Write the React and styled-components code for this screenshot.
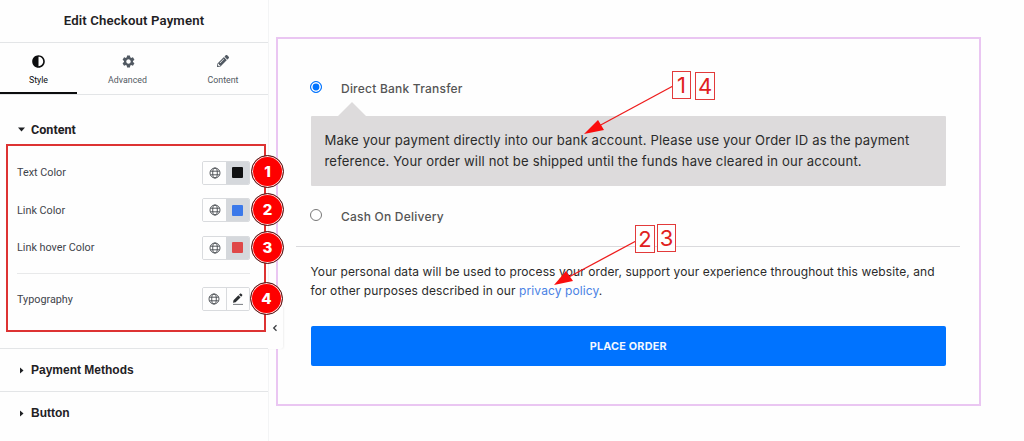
import React, { useState } from "react";
import styled, { createGlobalStyle } from "styled-components";
import { FaAdjust, FaPencilAlt } from "react-icons/fa";
import { MdSettings } from "react-icons/md";

/* COLORS */
const colorText = "#1f2124";
const colorMuted = "#515962";
const colorBorder = "#e3e5e7";
const colorAccent = "#0073ff";
const colorRed = "#fe0000";
const colorRedBorder = "#dd3333";
const colorFrame = "#eac6f2";
const colorPanel = "#dddbdc";

/* FONT */
const fontUi = "Roboto, sans-serif";
const fontHeading = "'Liberation Sans', Arial, sans-serif";
const fontPage = "Inter, sans-serif";

const GlobalStyle = createGlobalStyle`
    * {
        box-sizing: border-box;
    }

    body {
        margin: 0;
        background-color: #fefefe;
        overflow: hidden;
    }
`;

const Wrapper = styled.div`
    display: flex;
    width: 1024px;
    height: 441px;
    overflow: hidden;
    background-color: #fefefe;
`;

/* SIDEBAR */
const Sidebar = styled.aside`
    position: relative;
    z-index: 2;
    flex: none;
    width: 269px;
    height: 441px;
    border-right: 1px solid #f3f4f5;
    font-family: ${fontUi};
    color: ${colorText};
`;

const Title = styled.h1`
    height: 43px;
    margin: 0;
    border-bottom: 1px solid ${colorBorder};
    font-size: 13.2px;
    font-weight: 600;
    letter-spacing: 0.14px;
    line-height: 42px;
    text-align: center;
`;

const Tabs = styled.div`
    display: grid;
    grid-template-columns: 77px 101px 90px;
    height: 52px;
    border-bottom: 1px solid ${colorBorder};
`;

const Tab = styled.button`
    display: flex;
    flex-direction: column;
    align-items: center;
    gap: 6px;
    height: 51px;
    padding: 11px 0 0;
    border: none;
    border-bottom: ${(props) => (props.$active ? "2px solid #0c0d0e" : "none")};
    background: none;
    color: ${(props) => (props.$active ? "#0c0d0e" : colorMuted)};
    font-family: ${fontUi};
    font-size: 8.8px;
    line-height: 13px;
`;

const TabIcon = styled.span`
    display: grid;
    place-items: center;
    width: 14px;
    height: 14px;
`;

const SectionTitle = styled.h2`
    display: flex;
    align-items: center;
    gap: 6px;
    height: ${(props) => props.$height}px;
    margin: 0;
    padding: ${(props) => props.$top || 0}px 0 0 18px;
    border-top: ${(props) => (props.$line ? "1.5px solid " + colorBorder : "none")};
    font-family: ${(props) => (props.$line ? fontHeading : fontUi)};
    font-size: ${(props) => (props.$line ? 12 : 12.6)}px;
    font-weight: 700;
    letter-spacing: 0;
`;

const Caret = styled.svg`
    width: 7px;
    height: 7px;
    fill: currentColor;
`;

const Controls = styled.div`
    width: 260px;
    height: 188px;
    margin: 0 0 16px 6px;
    padding: 8px 0 0 9px;
    border: 2px solid ${colorRedBorder};
`;

const Row = styled.div`
    position: relative;
    display: flex;
    align-items: center;
    justify-content: space-between;
    width: 233px;
    height: 37.5px;
    font-size: 10.8px;
    color: #3f444b;
`;

const Separator = styled.div`
    width: 233px;
    height: 1px;
    margin: 6px 0 7px;
    background-color: #e8e9ea;
`;

const Picker = styled.div`
    display: flex;
    width: 48px;
    height: 24px;
    border: 1px solid #d9dbde;
    border-radius: 2px;
    overflow: hidden;
`;

const PickerCell = styled.div`
    flex: 1;
    display: grid;
    place-items: center;
    background-color: ${(props) => (props.$filled ? "#d5d8dc" : "#fefefe")};
    border-left: ${(props) => (props.$divided ? "1px solid #d9dbde" : "none")};
`;

const Swatch = styled.div`
    width: 11px;
    height: 11px;
    border-radius: 1px;
    background-color: ${(props) => props.$color};
`;

// numbered callout sitting over the right edge of the sidebar
const Badge = styled.div`
    position: absolute;
    top: ${(props) => props.$top}px;
    left: ${(props) => props.$left}px;
    display: grid;
    place-items: center;
    width: 33px;
    height: 33px;
    border: 1px solid #4a2020;
    border-radius: 50%;
    background-color: ${colorRed};
    box-shadow: inset 0 0 0 1px #ffd9d9;
    color: #fff;
    font-family: ${fontPage};
    font-size: 15px;
    font-weight: 800;
`;

const Collapse = styled.button`
    position: absolute;
    top: 306px;
    left: 267px;
    display: grid;
    place-items: center;
    width: 16px;
    height: 43px;
    padding: 0;
    border: none;
    border-radius: 0 3px 3px 0;
    background-color: #fefefe;
    box-shadow: 1px 0 2px rgba(0, 0, 0, 0.06);
    z-index: -1;
`;

/* PAGE PREVIEW */
const Preview = styled.main`
    position: relative;
    width: 755px;
    padding: 37px 0 0 7px;
    font-family: ${fontPage};
    color: #2b2b2b;
`;

const Frame = styled.section`
    width: 705px;
    height: 369px;
    padding: 39px 19px 0 18px;
    border: 2px solid ${colorFrame};
`;

const Option = styled.label`
    display: flex;
    align-items: center;
    gap: 19px;
    height: 20px;
    margin-left: 14px;
    color: #555;
    font-size: 12px;
    font-weight: 500;
    letter-spacing: 0.22px;
`;

const Radio = styled.input`
    appearance: none;
    flex: none;
    width: 12px;
    height: 12px;
    margin: -2px 0 0;
    border: 1px solid ${(props) => (props.checked ? colorAccent : "#777")};
    border-radius: 50%;
    background-color: ${(props) => (props.checked ? colorAccent : "#fff")};
    box-shadow: ${(props) => (props.checked ? "inset 0 0 0 1.6px #fff" : "none")};
`;

const Pointer = styled.div`
    width: 0;
    height: 0;
    margin: 4px 0 0 42px;
    border: 14px solid transparent;
    border-top: none;
    border-bottom: 14px solid ${colorPanel};
`;

const Description = styled.p`
    width: 635.5px;
    height: 70px;
    margin: 0 0 20px 14.5px;
    padding: 14px 0 0 14px;
    border-radius: 1px;
    background-color: ${colorPanel};
    font-size: 13.1px;
    letter-spacing: 0.158px;
    line-height: 21px;
    white-space: nowrap;
`;

const Rule = styled.hr`
    height: 1px;
    margin: 20px 0 15px;
    border: none;
    background-color: #dadadd;
`;

const Privacy = styled.p`
    margin: 0 0 26px 14.5px;
    font-size: 12px;
    letter-spacing: 0.105px;
    line-height: 19px;
    white-space: nowrap;
`;

const Link = styled.a`
    color: #4a82e4;
    text-decoration: none;
`;

const PlaceOrder = styled.button`
    display: block;
    width: 635.5px;
    height: 40px;
    margin-left: 14.5px;
    border: none;
    border-radius: 2px;
    background-color: ${colorAccent};
    color: #f3f8ff;
    font-family: ${fontPage};
    font-size: 10.8px;
    font-weight: 700;
    letter-spacing: 0.2px;
`;

/* ANNOTATIONS */
const Note = styled.div`
    position: absolute;
    top: ${(props) => props.$top}px;
    left: ${(props) => props.$left}px;
    display: grid;
    place-items: center;
    width: ${(props) => props.$width || 20}px;
    height: 28px;
    border: 1.5px solid #e23a3a;
    background-color: #fefefe;
    color: #e02020;
    font-family: ${fontPage};
    font-size: 22px;
    line-height: 1;
`;

const Arrow = styled.svg`
    position: absolute;
    top: ${(props) => props.$top}px;
    left: ${(props) => props.$left}px;
    width: 90px;
    height: 52px;
`;

function Globe() {
    return (
        <svg width="12" height="12" viewBox="0 0 12 12" fill="none" stroke="#45494e" strokeWidth="0.9">
            <circle cx="6" cy="6" r="5" />
            <ellipse cx="6" cy="6" rx="2.3" ry="5" />
            <path d="M1.5 4.2h9M1.5 7.8h9" />
        </svg>
    );
}

function EditIcon() {
    return (
        <svg width="12" height="12" viewBox="0 0 12 12">
            <path fill="#2b2e31" d="M1 9.8l.5-2.6 4.9-4.9 2.1 2.1-4.9 4.9zM7 1.7l1-1c.4-.4.8-.4 1.2 0l.9.9c.4.4.4.8 0 1.2l-1 1z" />
            <path stroke="#777b80" d="M1 11.4h10" />
        </svg>
    );
}

function Control({ label, color, badge, badgeTop, badgeLeft }) {
    return (
        <Row>
            {label}
            <Picker>
                <PickerCell>
                    <Globe />
                </PickerCell>
                <PickerCell $filled={!!color} $divided={!color}>
                    {color ? <Swatch $color={color} /> : <EditIcon />}
                </PickerCell>
            </Picker>
            <Badge $top={badgeTop} $left={badgeLeft}>
                {badge}
            </Badge>
        </Row>
    );
}

function App() {
    const [method, setMethod] = useState("bank");

    return (
        <Wrapper>
            <GlobalStyle />
            <Sidebar>
                <Title>Edit Checkout Payment</Title>
                <Tabs>
                    <Tab $active>
                        <TabIcon>
                            <FaAdjust size={13} />
                        </TabIcon>
                        Style
                    </Tab>
                    <Tab>
                        <TabIcon>
                            <MdSettings size={15} />
                        </TabIcon>
                        Advanced
                    </Tab>
                    <Tab>
                        <TabIcon>
                            <FaPencilAlt size={12} />
                        </TabIcon>
                        Content
                    </Tab>
                </Tabs>
                <SectionTitle $height={49} $top={20}>
                    <Caret viewBox="0 0 7 7">
                        <path d="M0 1.5h7L3.5 5.5z" />
                    </Caret>
                    Content
                </SectionTitle>
                <Controls>
                    <Control label="Text Color" color="#101112" badge="1" badgeTop={1} badgeLeft={234} />
                    <Control label="Link Color" color="#3b79ea" badge="2" badgeTop={1} badgeLeft={234} />
                    <Control label="Link hover Color" color="#df4848" badge="3" badgeTop={2} badgeLeft={234} />
                    <Separator />
                    <Control label="Typography" badge="4" badgeTop={1} badgeLeft={233} />
                </Controls>
                <SectionTitle $line $height={43}>
                    <Caret viewBox="0 0 7 7">
                        <path d="M2 .5v6L5.5 3.5z" />
                    </Caret>
                    Payment Methods
                </SectionTitle>
                <SectionTitle $line $height={43}>
                    <Caret viewBox="0 0 7 7">
                        <path d="M2 .5v6L5.5 3.5z" />
                    </Caret>
                    Button
                </SectionTitle>
                <Collapse>
                    <svg width="6" height="8" viewBox="0 0 6 8" fill="none" stroke="#3c3f43" strokeWidth="1.3">
                        <path d="M4.5 1.2L1.7 4l2.8 2.8" />
                    </svg>
                </Collapse>
            </Sidebar>
            <Preview>
                <Frame>
                    <Option>
                        <Radio type="radio" name="method" checked={method === "bank"} onChange={() => setMethod("bank")} />
                        Direct Bank Transfer
                    </Option>
                    <Pointer />
                    <Description>
                        Make your payment directly into our bank account. Please use your Order ID as the payment
                        <br />
                        reference. Your order will not be shipped until the funds have cleared in our account.
                    </Description>
                    <Option>
                        <Radio type="radio" name="method" checked={method === "cash"} onChange={() => setMethod("cash")} />
                        Cash On Delivery
                    </Option>
                    <Rule />
                    <Privacy>
                        Your personal data will be used to process your order, support your experience throughout this website, and
                        <br />
                        for other purposes described in our <Link>privacy policy</Link>.
                    </Privacy>
                    <PlaceOrder>PLACE ORDER</PlaceOrder>
                </Frame>
                <Arrow $top={84} $left={315}>
                    <path d="M89 2L13 43" stroke="#ee1c1c" strokeWidth="1.3" />
                    <path d="M0 50L14 36L20 46z" fill="#fb0d0d" />
                </Arrow>
                <Note $top={71} $left={403} $width={19}>1</Note>
                <Note $top={72} $left={426} $width={20}>4</Note>
                <Arrow $top={239} $left={285}>
                    <path d="M82 2L13 39" stroke="#ee1c1c" strokeWidth="1.3" />
                    <path d="M0 46L12 32L19 42z" fill="#fb0d0d" />
                </Arrow>
                <Note $top={225} $left={366} $width={20}>2</Note>
                <Note $top={224} $left={388} $width={19}>3</Note>
            </Preview>
        </Wrapper>
    );
}

export default App;
